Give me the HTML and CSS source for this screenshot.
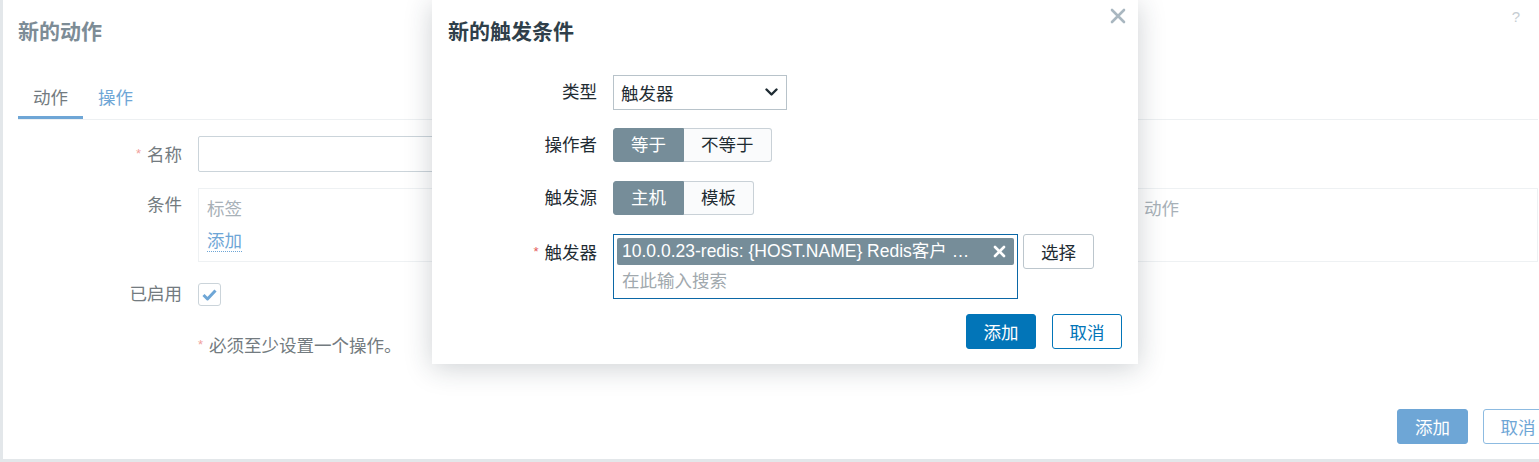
FILE: index.html
```html
<!DOCTYPE html>
<html lang="zh-CN">
<head>
<meta charset="utf-8">
<title>新的触发条件</title>
<link rel="stylesheet" href="styles.css">
</head>
<body>
<div class="page">
  <div class="dialog">
    <div class="dlg-head">
      <h4 class="dlg-title">新的动作</h4>
      <span class="help">?</span>
    </div>
    <div class="dlg-body">
      <ul class="tabs">
        <li class="tab active">动作</li>
        <li class="tab link-tab">操作</li>
      </ul>
      <div class="form">
        <label class="lbl"><span class="req">*</span>名称</label>
        <div class="ctl"><input class="text-in" type="text"></div>

        <label class="lbl lbl-top">条件</label>
        <div class="ctl">
          <div class="cond-box">
            <div class="cond-head"><span>标签</span><span>动作</span></div>
            <div class="cond-add"><a class="dotted-link">添加</a></div>
          </div>
        </div>

        <label class="lbl">已启用</label>
        <div class="ctl ctl-center">
          <span class="checkbox">
            <svg width="15" height="12" viewBox="0 0 15 12"><polyline points="1.5,6 5.5,10 13.5,1.5" fill="none" stroke="#6ea6d6" stroke-width="3" stroke-linejoin="round"/></svg>
          </span>
        </div>

        <span class="lbl"></span>
        <div class="ctl ctl-center note"><span class="req">*</span>必须至少设置一个操作。</div>
      </div>
    </div>
    <div class="dlg-foot">
      <button class="btn-bg">添加</button>
      <button class="btn-bg-ghost">取消</button>
    </div>
  </div>

  <div class="modal">
    <div class="m-head">
      <h4 class="m-title">新的触发条件</h4>
      <span class="m-close">
        <svg width="16" height="16" viewBox="0 0 16 16"><path d="M2 2 L14 14 M14 2 L2 14" stroke="#a9b7c0" stroke-width="2.6" stroke-linecap="round"/></svg>
      </span>
    </div>
    <div class="m-body">
      <label class="m-lbl">类型</label>
      <div class="select">
        <span>触发器</span>
        <svg width="13" height="9" viewBox="0 0 13 9"><polyline points="1.5,1.5 6.5,6.5 11.5,1.5" fill="none" stroke="#1f2c33" stroke-width="2.4" stroke-linecap="round" stroke-linejoin="round"/></svg>
      </div>

      <label class="m-lbl">操作者</label>
      <div class="ctl-row"><div class="seg"><span class="seg-i on">等于</span><span class="seg-i">不等于</span></div></div>

      <label class="m-lbl">触发源</label>
      <div class="ctl-row"><div class="seg"><span class="seg-i on">主机</span><span class="seg-i">模板</span></div></div>

      <label class="m-lbl"><span class="req req-strong">*</span>触发器</label>
      <div class="ms-row">
        <div class="ms">
          <div class="chip">
            <span class="chip-t">10.0.0.23-redis: {HOST.NAME} Redis客户 …</span>
            <svg class="chip-x" width="13" height="13" viewBox="0 0 13 13"><path d="M2 2 L11 11 M11 2 L2 11" stroke="#fff" stroke-width="2.6" stroke-linecap="round"/></svg>
          </div>
          <div class="ms-ph">在此输入搜索</div>
        </div>
        <button class="btn-alt">选择</button>
      </div>
    </div>
    <div class="m-foot">
      <button class="btn">添加</button>
      <button class="btn-ghost">取消</button>
    </div>
  </div>
</div>
</body>
</html>
```

FILE: styles.css
```css
html, body {
  margin: 0;
  padding: 0;
  overflow: hidden;
}
body {
  background: #e3e7ea;
  font-family: "Liberation Sans", "Noto Sans CJK SC", sans-serif;
  font-size: 17.5px;
  color: #1f2c33;
}
.page {
  position: relative;
  width: 1539px;
  height: 462px;
  overflow: hidden;
}

/* background dialog */
.dialog {
  margin-left: 3px;
  width: 1553px;
  height: 459px;
  background: #fff;
  display: flex;
  flex-direction: column;
}
.dlg-head {
  height: 60px;
  display: flex;
  align-items: center;
  justify-content: space-between;
  padding: 0 36px 0 15px;
}
.dlg-title {
  margin: 0;
  font-size: 21px;
  font-weight: bold;
  color: #7d8c96;
}
.help {
  align-self: flex-start;
  margin-top: 8px;
  font-size: 15px;
  color: #c6cdd2;
}
.dlg-body {
  padding: 18px 18px 0 15px;
}
.tabs {
  list-style: none;
  margin: 0;
  padding: 0;
  display: flex;
  border-bottom: 1px solid #edf0f2;
}
.tab {
  padding: 9px 15px 7px;
  line-height: 22px;
  border-bottom: 3px solid transparent;
  color: #737b80;
}
.tab.active {
  border-bottom-color: #6ea6d6;
}
.tab.link-tab {
  color: #6ea6d6;
}
.form {
  margin-top: 16px;
  display: grid;
  grid-template-columns: 164px 1fr;
  column-gap: 16px;
  row-gap: 15px;
}
.lbl {
  text-align: right;
  line-height: 35px;
  color: #737b80;
}
.lbl-top {
  line-height: 35px;
}
.req {
  display: inline-block;
  color: #f0a09c;
  font-size: 13px;
  vertical-align: 3px;
  margin-right: 6px;
}
.req-strong {
  color: #e45959;
}
.ctl {
  min-height: 35px;
}
.ctl-center {
  display: flex;
  align-items: center;
}
.text-in {
  display: block;
  box-sizing: border-box;
  width: 620px;
  height: 36px;
  border: 1px solid #cbd4da;
  border-radius: 2px;
  background: #fff;
  margin: 0;
}
.cond-box {
  border: 1px solid #eef1f3;
  padding: 7px 8px;
  display: flex;
  flex-direction: column;
  gap: 6px;
}
.cond-head {
  display: grid;
  grid-template-columns: 937px auto;
  line-height: 26px;
  color: #a8b1b8;
}
.cond-add {
  line-height: 26px;
}
.dotted-link {
  color: #6ea6d6;
  border-bottom: 1px dotted #6ea6d6;
}
.checkbox {
  box-sizing: border-box;
  width: 23px;
  height: 23px;
  border: 1px solid #cbd4da;
  border-radius: 3px;
  display: flex;
  align-items: center;
  justify-content: center;
}
.note {
  color: #737b80;
}
.note .req {
  margin-right: 6px;
}
.dlg-foot {
  margin-top: auto;
  display: flex;
  justify-content: flex-end;
  gap: 15px;
  padding: 0 3px 15px 0;
}
.btn-bg, .btn-bg-ghost, .btn, .btn-ghost, .btn-alt {
  box-sizing: border-box;
  height: 35px;
  width: 71px;
  font-family: inherit;
  font-size: 17.5px;
  border-radius: 3px;
  padding: 0;
  margin: 0;
}
.btn-bg {
  background: #6ea6d6;
  border: 1px solid #6ea6d6;
  color: #fff;
}
.btn-bg-ghost {
  width: 70px;
  background: #fff;
  border: 1px solid #8dbbe1;
  color: #6ea6d6;
}

/* modal */
.modal {
  position: absolute;
  left: 432px;
  top: 0;
  width: 706px;
  background: #fff;
  box-shadow: 0 4px 26px rgba(30, 45, 60, 0.22);
}
.m-head {
  height: 60px;
  display: flex;
  align-items: center;
  justify-content: space-between;
  padding: 0 12px 0 16px;
}
.m-title {
  margin: 0;
  font-size: 21px;
  font-weight: bold;
  color: #2f3f4a;
}
.m-close {
  align-self: flex-start;
  margin-top: 8px;
  display: flex;
}
.m-body {
  padding: 15px 16px 0 16px;
  display: grid;
  grid-template-columns: 149px 1fr;
  column-gap: 16px;
  row-gap: 18px;
}
.m-lbl {
  text-align: right;
  line-height: 35px;
  color: #1f2c33;
}
.select {
  box-sizing: border-box;
  width: 174px;
  height: 35px;
  border: 1px solid #b8c3ca;
  display: flex;
  align-items: center;
  justify-content: space-between;
  padding: 0 8px 0 7px;
}
.ctl-row {
  display: flex;
}
.seg {
  display: flex;
  height: 34px;
}
.seg-i {
  box-sizing: border-box;
  height: 34px;
  line-height: 32px;
  padding: 0 17px;
  border: 1px solid #c9d1d7;
  background: #fafbfc;
  color: #1f2c33;
}
.seg-i:first-child {
  border-radius: 3px 0 0 3px;
}
.seg-i:last-child {
  border-left: none;
  border-radius: 0 3px 3px 0;
}
.seg-i.on {
  background: #768d99;
  border-color: #768d99;
  color: #fff;
}
.ms-row {
  display: flex;
  align-items: flex-start;
  gap: 5px;
}
.ms {
  box-sizing: border-box;
  width: 405px;
  height: 65px;
  border: 1px solid #0b67a6;
  padding: 3px 3px 0;
}
.chip {
  height: 27px;
  background: #768d99;
  border-radius: 2px;
  display: flex;
  align-items: center;
  justify-content: space-between;
  padding: 0 8px 0 5px;
  color: #fff;
}
.chip-t {
  white-space: nowrap;
  line-height: 27px;
}
.chip-x {
  flex: none;
}
.ms-ph {
  margin-top: 3px;
  padding-left: 5px;
  line-height: 26px;
  color: #a1a9ae;
}
.btn-alt {
  background: #fff;
  border: 1px solid #bcc6cd;
  color: #1f2c33;
}
.m-foot {
  display: flex;
  justify-content: flex-end;
  gap: 16px;
  padding: 15px 16px 15px 0;
}
.btn {
  width: 70px;
  background: #0275b8;
  border: 1px solid #0275b8;
  color: #fff;
}
.btn-ghost {
  width: 70px;
  background: #fff;
  border: 1px solid #0275b8;
  color: #0275b8;
}
```
